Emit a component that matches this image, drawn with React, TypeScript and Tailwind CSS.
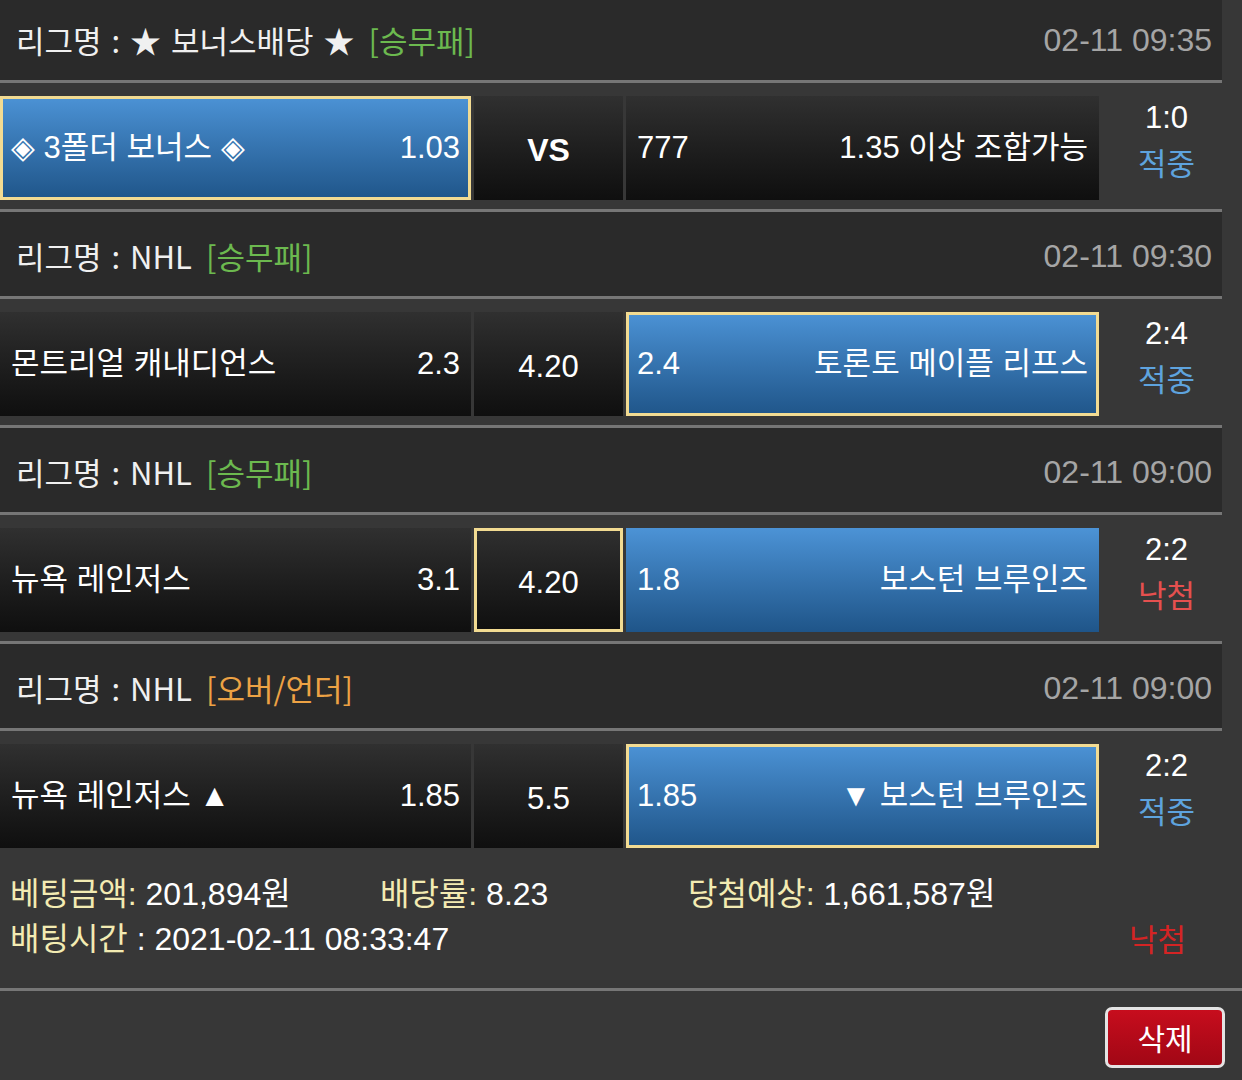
import React from 'react';

type Cell = {
  label: string;
  odds: string;
  selected?: boolean;
  won?: boolean;
};

type Match = {
  league: string;
  market: string;
  marketColor: string;
  time: string;
  home: Cell;
  draw: { text: string; bold?: boolean; selected?: boolean };
  away: Cell;
  score: string;
  result: '적중' | '낙첨';
};

const matches: Match[] = [
  {
    league: '★ 보너스배당 ★',
    market: '[승무패]',
    marketColor: 'text-[#6cb94f]',
    time: '02-11 09:35',
    home: { label: '◈ 3폴더 보너스 ◈', odds: '1.03', selected: true, won: true },
    draw: { text: 'VS', bold: true },
    away: { label: '1.35 이상 조합가능', odds: '777' },
    score: '1:0',
    result: '적중',
  },
  {
    league: 'NHL',
    market: '[승무패]',
    marketColor: 'text-[#6cb94f]',
    time: '02-11 09:30',
    home: { label: '몬트리얼 캐내디언스', odds: '2.3' },
    draw: { text: '4.20' },
    away: { label: '토론토 메이플 리프스', odds: '2.4', selected: true, won: true },
    score: '2:4',
    result: '적중',
  },
  {
    league: 'NHL',
    market: '[승무패]',
    marketColor: 'text-[#6cb94f]',
    time: '02-11 09:00',
    home: { label: '뉴욕 레인저스', odds: '3.1' },
    draw: { text: '4.20', selected: true },
    away: { label: '보스턴 브루인즈', odds: '1.8', won: true },
    score: '2:2',
    result: '낙첨',
  },
  {
    league: 'NHL',
    market: '[오버/언더]',
    marketColor: 'text-[#eda244]',
    time: '02-11 09:00',
    home: { label: '뉴욕 레인저스 ▲', odds: '1.85' },
    draw: { text: '5.5' },
    away: { label: '▼ 보스턴 브루인즈', odds: '1.85', selected: true, won: true },
    score: '2:2',
    result: '적중',
  },
];

const cellFont = "font-['Liberation_Sans','Noto_Sans_CJK_KR',sans-serif]";
const darkCell = 'bg-gradient-to-b from-[#303030] to-[#0f0f0f]';
const blueCell = 'bg-gradient-to-b from-[#4c93d6] to-[#1f5589]';

function cellClass(c: { selected?: boolean; won?: boolean }) {
  const bg = c.won ? blueCell : darkCell;
  const border = c.selected ? 'border-[3px] border-[#f2db92]' : 'border-[3px] border-transparent';
  return `${bg} bg-origin-border ${border} h-[104px] flex items-center text-white text-[31px]`;
}

function Separator() {
  return <div className="h-[3px] bg-[#767676]" />;
}

function LeagueHeader({ m, first }: { m: Match; first?: boolean }) {
  return (
    <div
      className={`${first ? 'h-[80px]' : 'h-[84px] pt-[4px]'} bg-[#2a2a2a] flex items-center justify-between pl-[16px] pr-[10px]`}
    >
      <div className="font-['Noto_Sans_CJK_KR',sans-serif] text-[31px] [word-spacing:3px] text-[#f0f0f0] whitespace-nowrap">
        리그명 : {m.league}
        <span className={`ml-[14px] ${m.marketColor}`}>{m.market}</span>
      </div>
      <div className="font-['Liberation_Sans',sans-serif] text-[32px] text-[#a5a5a5]">{m.time}</div>
    </div>
  );
}

function MatchRow({ m }: { m: Match }) {
  return (
    <div className={`flex pt-[13px] pb-[9px] ${cellFont}`}>
      <div className={`w-[471px] justify-between pl-[8px] pr-[8px] ${cellClass(m.home)}`}>
        <span className="whitespace-nowrap">{m.home.label}</span>
        <span>{m.home.odds}</span>
      </div>
      <div
        className={`w-[149px] ml-[3px] justify-center ${cellClass({ selected: m.draw.selected })} ${
          m.draw.bold ? 'font-bold !text-[32px] pt-[4px]' : 'pt-[6px]'
        }`}
      >
        {m.draw.text}
      </div>
      <div className={`w-[473px] ml-[3px] justify-between pl-[8px] pr-[8px] ${cellClass(m.away)}`}>
        <span>{m.away.odds}</span>
        <span className="whitespace-nowrap">{m.away.label}</span>
      </div>
      <div className="w-[123px] h-[104px] pl-[12px] flex flex-col items-center">
        <div className="text-[31px] leading-[44px] text-white">{m.score}</div>
        <div
          className={`font-['Noto_Sans_CJK_KR',sans-serif] text-[31px] leading-[44px] ${
            m.result === '적중' ? 'text-[#5ea3de]' : 'text-[#e5504f]'
          }`}
        >
          {m.result}
        </div>
      </div>
    </div>
  );
}

export default function App() {
  return (
    <div className="w-[1242px] h-[1080px] bg-[#373737] overflow-hidden">
      <div className="w-[1222px]">
        {matches.map((m, i) => (
          <div key={i}>
            {i > 0 && <Separator />}
            <LeagueHeader m={m} first={i === 0} />
            <Separator />
            <MatchRow m={m} />
          </div>
        ))}
      </div>

      <div className="pl-[10px] pr-[56px] pt-[14px] pb-[27px] font-['Liberation_Sans','Noto_Sans_CJK_KR',sans-serif] text-[32px] text-white">
        <div className="flex h-[45px] items-center">
          <div className="w-[370px]">
            <span className="text-[#f3ebb2]">베팅금액:</span> 201,894원
          </div>
          <div className="w-[308px]">
            <span className="text-[#f3ebb2]">배당률:</span> 8.23
          </div>
          <div>
            <span className="text-[#f3ebb2]">당첨예상:</span> 1,661,587원
          </div>
        </div>
        <div className="flex h-[45px] items-center justify-between">
          <div>
            <span className="text-[#f3ebb2]">배팅시간</span> : 2021-02-11 08:33:47
          </div>
          <div className="font-['Noto_Sans_CJK_KR',sans-serif] text-[31px] text-[#d42424]">낙첨</div>
        </div>
      </div>

      <div className="h-[3px] bg-[#767676]" />

      <div className="flex justify-end pr-[17px] pt-[16px]">
        <button className="w-[120px] h-[61px] rounded-[7px] border-[3px] border-[#e4e4e4] bg-gradient-to-b from-[#c70d1d] to-[#a10715] text-white text-[30px] font-['Noto_Sans_CJK_KR',sans-serif] flex items-center justify-center">
          삭제
        </button>
      </div>
    </div>
  );
}
